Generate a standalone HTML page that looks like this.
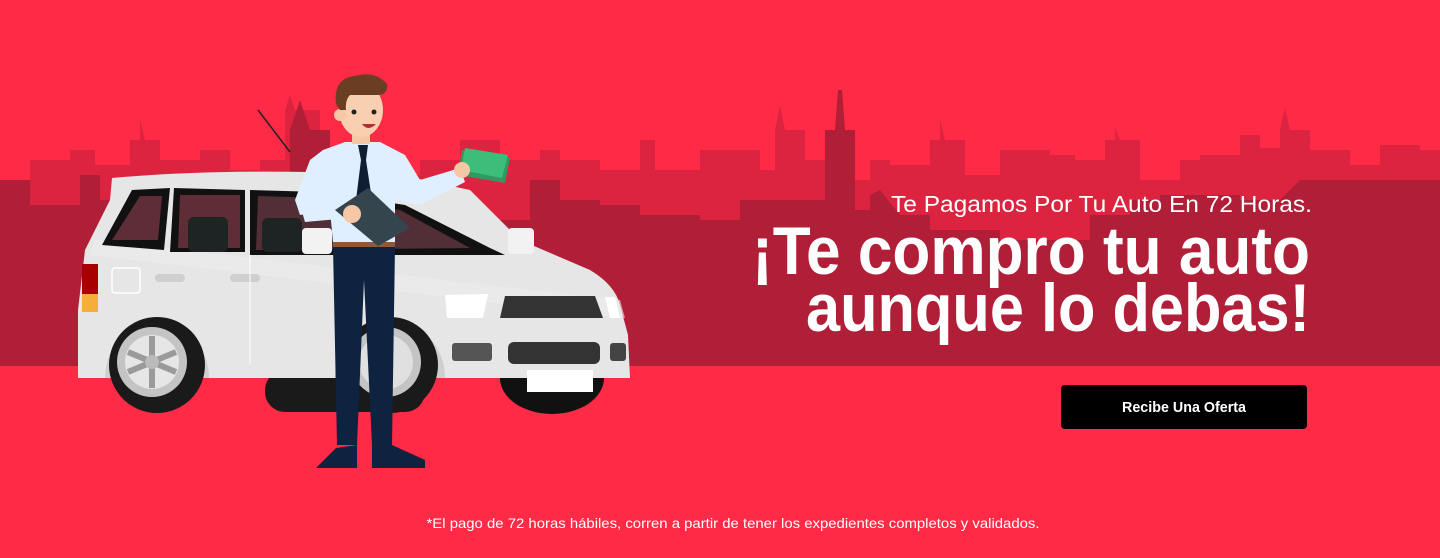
<!DOCTYPE html>
<html><head><meta charset="utf-8"><style>
html,body{margin:0;padding:0;background:#ff2a45;}
svg{display:block}
</style></head><body>
<svg width="1440" height="558" viewBox="0 0 1440 558" xmlns="http://www.w3.org/2000/svg">
<rect width="1440" height="558" fill="#ff2a45"/>
<g fill="#dc2440">
<path d="M0 190 L30 190 L30 160 L70 160 L70 150 L95 150 L95 165 L130 165 L130 140 L140 140 L140 120 L145 140 L160 140 L160 160 L200 160 L200 150 L230 150 L230 170 L260 170 L260 160 L285 160 L285 110 L290 95 L295 110 L320 110 L320 160 L345 160 L345 150 L380 150 L380 175 L420 175 L420 160 L460 160 L460 140 L500 140 L500 160 L540 160 L540 150 L560 150 L560 160 L600 160 L600 170 L640 170 L640 140 L655 140 L655 170 L700 170 L700 150 L760 150 L760 170 L775 170 L775 130 L780 105 L785 130 L805 130 L805 160 L825 160 L825 180 L870 180 L870 160 L890 160 L890 165 L930 165 L930 140 L940 140 L940 120 L945 140 L965 140 L965 175 L1000 175 L1000 150 L1050 150 L1050 155 L1075 155 L1075 160 L1105 160 L1105 140 L1115 140 L1115 128 L1120 140 L1140 140 L1140 180 L1180 180 L1180 160 L1200 160 L1200 155 L1240 155 L1240 135 L1260 135 L1260 148 L1280 148 L1280 130 L1285 108 L1290 130 L1310 130 L1310 150 L1350 150 L1350 165 L1380 165 L1380 145 L1420 145 L1420 150 L1440 150 L1440 366 L0 366 Z"/>
</g>
<g fill="#b01e37">
<path d="M0 180 L30 180 L30 205 L80 205 L80 175 L100 175 L100 200 L130 200 L130 210 L160 210 L160 200 L180 200 L180 230 L210 230 L210 215 L260 215 L260 190 L290 190 L290 130 L300 100 L310 130 L330 130 L330 200 L360 200 L360 190 L400 190 L400 205 L460 205 L460 220 L530 220 L530 180 L560 180 L560 200 L600 200 L600 205 L640 205 L640 215 L700 215 L700 220 L740 220 L740 200 L770 200 L825 200 L825 130 L835 130 L838 90 L842 90 L845 130 L855 130 L855 210 L870 210 L870 195 L880 190 L900 215 L930 215 L930 230 L1000 230 L1000 240 L1090 240 L1090 215 L1130 215 L1130 200 L1160 200 L1160 195 L1240 195 L1240 200 L1280 200 L1300 180 L1440 180 L1440 366 L0 366 Z"/>
</g>
<line x1="258" y1="110" x2="290" y2="152" stroke="#222" stroke-width="1.5"/>
<!-- car -->
<g>
<ellipse cx="552" cy="378" rx="52" ry="36" fill="#111"/>
<rect x="265" y="370" width="160" height="42" rx="20" fill="#1a1a1a"/>
<path d="M112 178 Q200 170 310 172 L400 175 L470 190 L520 240 L590 270 Q615 285 620 305 L628 335 L630 378 L78 378 L78 345 L78 310 L85 250 L110 200 Z" fill="#e6e6e6"/>
<path d="M95 240 L620 300 L625 318 L90 255 Z" fill="#ededed" opacity="0.6"/>
<!-- wheel arches -->
<path d="M105 378 A52 55 0 0 1 209 378 Z" fill="#cfcfcf"/>
<path d="M335 378 A55 58 0 0 1 445 378 Z" fill="#cfcfcf"/>
<!-- rear wheel -->
<circle cx="157" cy="365" r="48" fill="#1a1a1a"/>
<circle cx="152" cy="362" r="35" fill="#c4c4c4"/>
<circle cx="152" cy="362" r="27" fill="#e6e6e6"/>
<g stroke="#9a9a9a" stroke-width="6"><line x1="152" y1="336" x2="152" y2="388"/><line x1="128" y1="352" x2="176" y2="372"/><line x1="128" y1="372" x2="176" y2="352"/></g>
<circle cx="152" cy="362" r="7" fill="#bbb"/>
<!-- front wheel -->
<circle cx="390" cy="365" r="48" fill="#1a1a1a"/>
<circle cx="386" cy="362" r="35" fill="#c4c4c4"/>
<circle cx="386" cy="362" r="27" fill="#e0e0e0"/>
<!-- windows -->
<path d="M102 245 L132 190 L170 188 L164 250 Z" fill="#111"/>
<path d="M112 240 L140 196 L162 196 L158 240 Z" fill="#5e2d38"/>
<path d="M174 188 L245 190 L245 252 L170 252 Z" fill="#111"/>
<path d="M180 195 L240 195 L240 248 L178 248 Z" fill="#5e2d38"/>
<rect x="188" y="217" width="40" height="35" rx="6" fill="#1e2424"/>
<path d="M250 190 L320 192 L405 205 L490 248 L505 255 L250 255 Z" fill="#111"/>
<path d="M258 196 L320 198 L400 210 L470 248 L256 250 Z" fill="#522e36"/>
<rect x="262" y="218" width="40" height="34" rx="6" fill="#1e2424"/>
<rect x="302" y="228" width="30" height="26" rx="4" fill="#f2f2f2"/>
<rect x="508" y="228" width="26" height="26" rx="4" fill="#f2f2f2"/>
<rect x="82" y="264" width="16" height="30" fill="#a80000"/>
<rect x="82" y="294" width="16" height="18" fill="#f7ad3a"/>
<rect x="112" y="268" width="28" height="25" rx="3" fill="none" stroke="#fff" stroke-width="1.5"/>
<rect x="155" y="274" width="30" height="8" rx="4" fill="#cfcfcf"/>
<rect x="230" y="274" width="30" height="8" rx="4" fill="#cfcfcf"/>
<line x1="250" y1="255" x2="250" y2="365" stroke="#fff" stroke-width="1"/>
<path d="M445 295 L488 294 L483 318 L447 318 Z" fill="#fff"/>
<path d="M505 296 L595 296 L603 318 L500 318 Z" fill="#333"/>
<path d="M605 297 L615 297 L620 318 L610 318 Z" fill="#fff"/>
<rect x="452" y="343" width="40" height="18" rx="3" fill="#555"/>
<rect x="508" y="342" width="92" height="22" rx="6" fill="#333"/>
<rect x="610" y="343" width="16" height="18" rx="3" fill="#444"/>
<rect x="527" y="370" width="66" height="22" fill="#fff"/>
</g>
<!-- man -->
<g>
<path d="M333 246 L395 246 L392 445 L372 445 L364 280 L357 445 L337 445 Z" fill="#0f2340"/>
<path d="M336 448 L357 445 L357 468 L316 468 Z" fill="#0f2340"/>
<path d="M372 445 L392 445 L425 460 L425 468 L372 468 Z" fill="#0f2340"/>
<rect x="333" y="240" width="62" height="7" fill="#8a5a3b"/>
<path d="M323 150 L345 142 L380 142 L405 155 L420 180 L460 168 L465 182 L420 205 L395 200 L395 242 L333 242 L330 210 L300 215 L295 200 L310 160 Z" fill="#dfefff"/>
<path d="M358 145 L368 145 L366 160 L372 200 L364 215 L356 200 L361 160 Z" fill="#0f1e33"/>
<path d="M300 205 L345 205 L350 218 L305 222 Z" fill="#dfefff"/>
<path d="M335 210 L368 188 L410 228 L378 246 Z" fill="#35454d"/>
<circle cx="352" cy="214" r="9" fill="#f5c7a5"/>
<path d="M462 150 L510 158 L505 183 L458 175 Z" fill="#2e9a5f"/>
<path d="M465 148 L508 155 L502 178 L461 170 Z" fill="#3dbd7a"/>
<circle cx="462" cy="170" r="8" fill="#f5c7a5"/>
<rect x="352" y="128" width="18" height="16" fill="#f5c7a5"/>
<ellipse cx="361" cy="110" rx="22" ry="27" fill="#f8d0b0"/>
<circle cx="340" cy="115" r="6" fill="#f5c7a5"/>
<path d="M336 104 Q333 78 355 76 Q375 70 387 84 Q388 95 378 95 L350 95 Q345 100 346 110 L340 110 Z" fill="#6b3d22"/>
<circle cx="354" cy="112" r="2.5" fill="#222"/>
<circle cx="374" cy="112" r="2.5" fill="#222"/>
<path d="M362 124 Q368 132 376 124 Z" fill="#a33"/>
</g>
<g font-family="'Liberation Sans', sans-serif" fill="#fff">
<text x="1312" y="212" text-anchor="end" font-size="23" textLength="421" lengthAdjust="spacingAndGlyphs">Te Pagamos Por Tu Auto En 72 Horas.</text>
<text x="752" y="274" font-size="68" font-weight="bold" textLength="558" lengthAdjust="spacingAndGlyphs">¡Te compro tu auto</text>
<text x="806" y="331" font-size="68" font-weight="bold" textLength="504" lengthAdjust="spacingAndGlyphs">aunque lo debas!</text>
</g>
<rect x="1061" y="385" width="246" height="44" rx="4" fill="#000"/>
<text x="1184" y="412" text-anchor="middle" font-family="'Liberation Sans', sans-serif" font-size="15" font-weight="bold" fill="#fff" textLength="124" lengthAdjust="spacingAndGlyphs">Recibe Una Oferta</text>
<text x="733" y="528" text-anchor="middle" font-family="'Liberation Sans', sans-serif" font-size="14" fill="#fff" textLength="613" lengthAdjust="spacingAndGlyphs">*El pago de 72 horas hábiles, corren a partir de tener los expedientes completos y validados.</text>
</svg>
</body></html>
